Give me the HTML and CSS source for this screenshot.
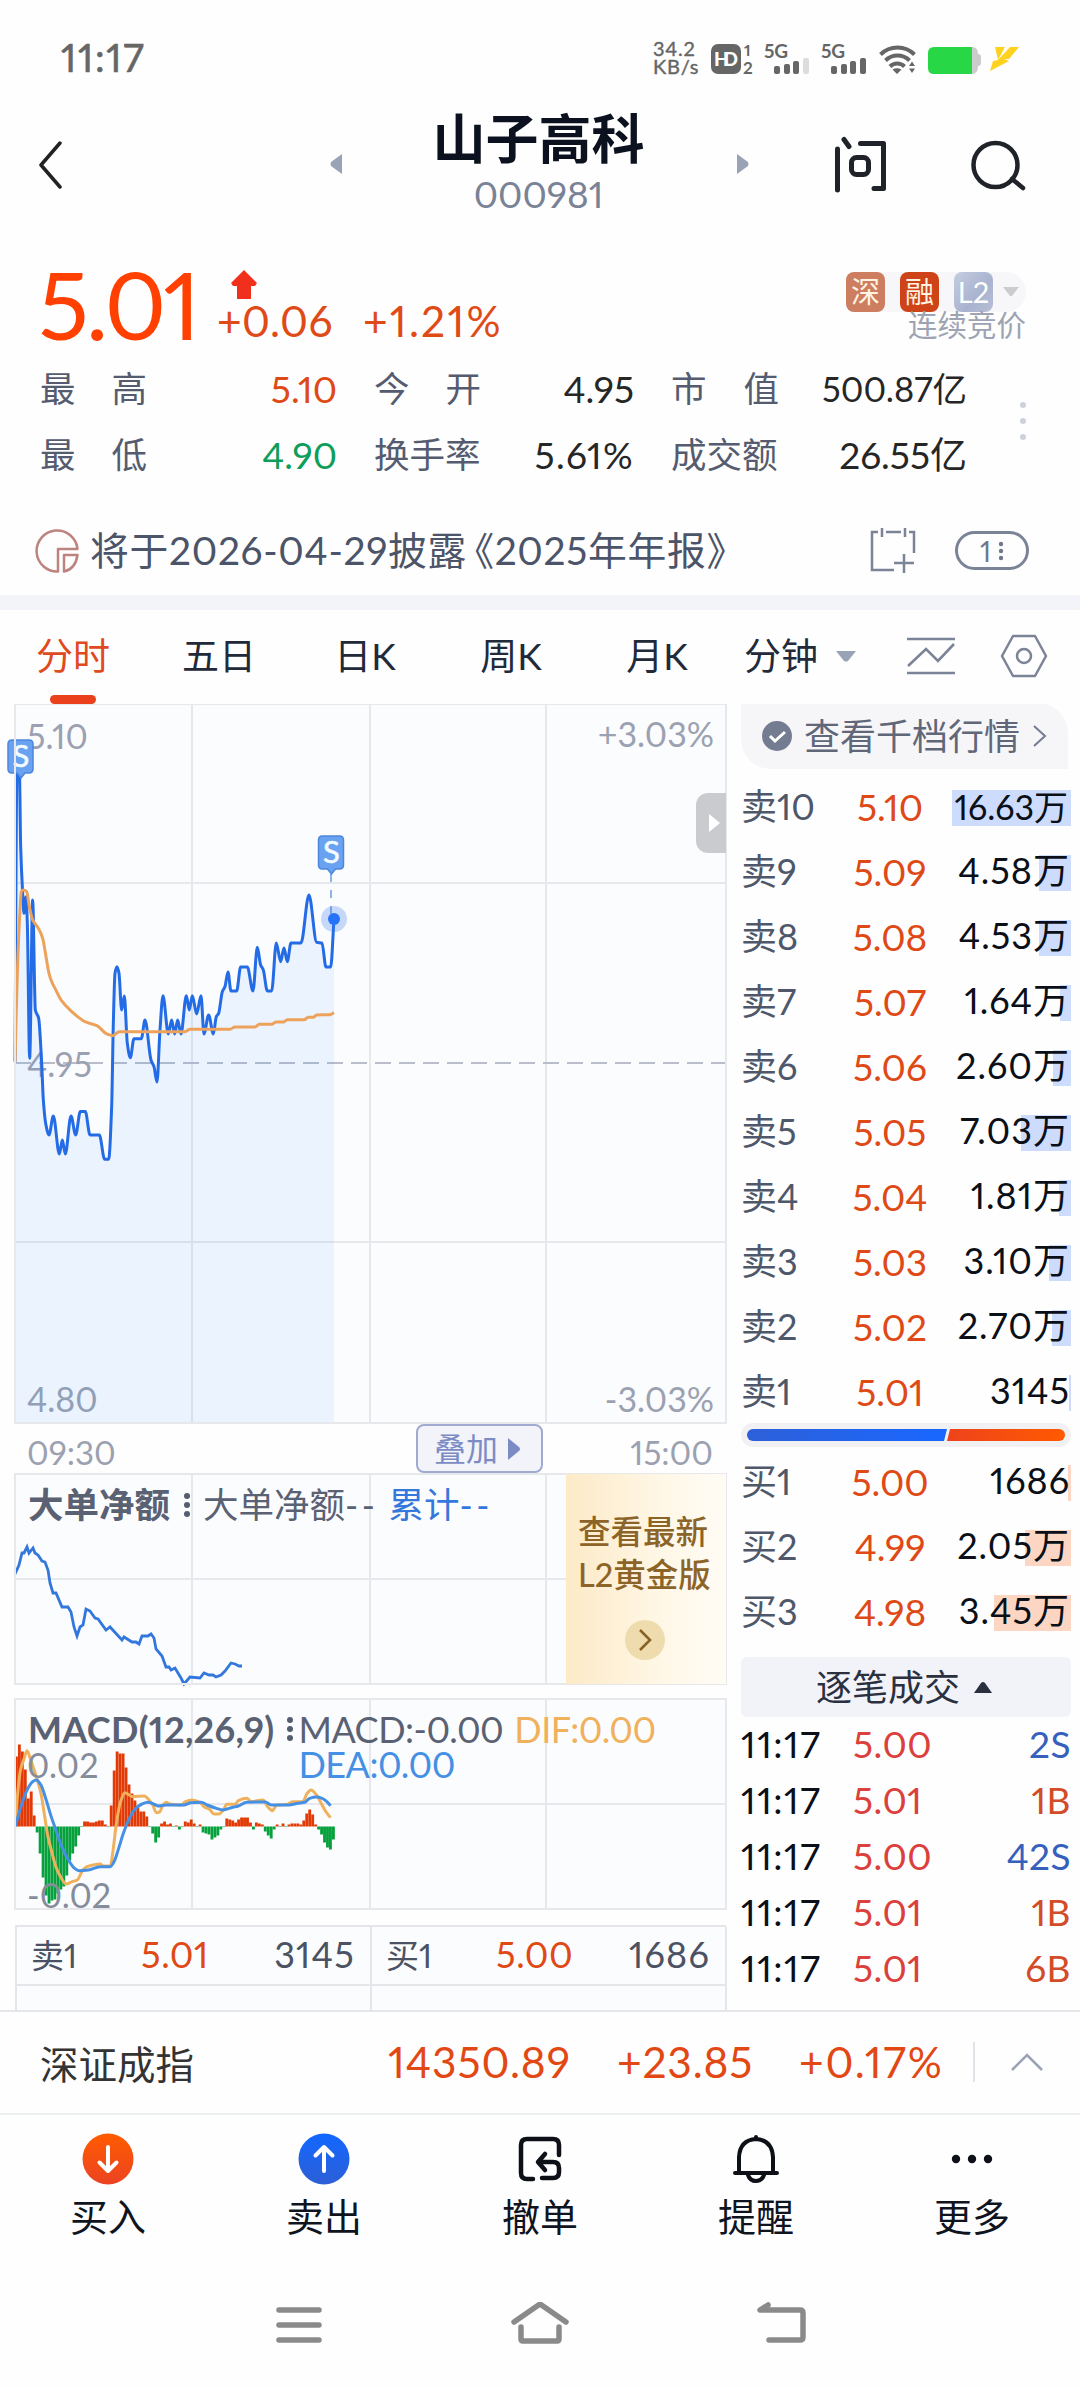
FILE: index.html
```html
<!DOCTYPE html>
<html lang="zh-CN">
<head>
    <meta charset="UTF-8">
    <meta name="viewport" content="width=device-width, initial-scale=1.0">
    <title>山子高科 000981</title>
    <link rel="stylesheet" href="styles.css">
</head>
<body>

<div class="status">
    <span class="clock">11:17</span>
    <div class="speed"><span>34.2</span><span>KB/s</span></div>
    <svg class="status-icons" viewBox="708 0 312 114" width="312" height="114">
        <g fill="#666">
            <rect x="711" y="44" width="30" height="30" rx="7"/>
            <text x="714" y="66" font-size="19" font-weight="900" fill="#fff" textLength="24">HD</text>
            <text x="744" y="56" font-size="16" font-weight="700">1</text>
            <text x="743" y="74" font-size="17" font-weight="700">2</text>
            <text x="764" y="58" font-size="19" font-weight="700" textLength="24">5G</text>
            <text x="821" y="58" font-size="19" font-weight="700" textLength="24">5G</text>
            <rect x="774" y="66" width="6" height="8" rx="2"/>
            <rect x="784" y="64" width="6" height="10" rx="2"/>
            <rect x="793" y="61" width="6" height="13" rx="2"/>
            <rect x="803" y="58" width="6" height="16" rx="2" fill="#ddd"/>
            <rect x="831" y="66" width="6" height="8" rx="2"/>
            <rect x="841" y="64" width="6" height="10" rx="2"/>
            <rect x="850" y="61" width="6" height="13" rx="2"/>
            <rect x="860" y="58" width="6" height="16" rx="2"/>
            <path d="M892.500 69.500q4.500-2.500 9 0l-4.500 4.500zM909 66l3-4.500 3 4.500zM909 68.500l3 4.500 3-4.500z"/>
        </g>
        <g fill="none" stroke="#666" stroke-width="4">
            <path d="M880.500 54.500a24 24 0 0 1 34 0M885.500 60.500a17 17 0 0 1 24 0M890 66.500a10 10 0 0 1 14.500 0"/>
        </g>
        <path d="M972 47q6 0 6 7 3 0 3 3v6q0 3-3 3 0 8-6 8z" fill="#ccc"/>
        <path d="M934 47h38v27h-38q-6 0-6-6V53q0-6 6-6z" fill="#28d745"/>
        <path d="M995 47h10l-7 13zM1010 47h9l-10 12h-5l5 2-19 10 3-10 5-1z" fill="#ffd21f"/>
    </svg>
</div>

<header class="header">
    <svg class="back" viewBox="0 0 24 48" width="24" height="48"><path d="M22 2L3 24l19 22" fill="none" stroke="#222" stroke-width="3.500" stroke-linecap="round" stroke-linejoin="round"/></svg>
    <svg class="prev" viewBox="0 0 12 20" width="12" height="20"><path d="M12 0v20L1 12q-1-2 0-4z" fill="#9aa3b5"/></svg>
    <div class="title">
        <h1>山子高科</h1>
        <p>000981</p>
    </div>
    <svg class="next" viewBox="0 0 12 20" width="12" height="20"><path d="M0 0v20l11-8q1-2 0-4z" fill="#9aa3b5"/></svg>
    <svg class="ask" viewBox="834 134 56 60" width="56" height="60"><g fill="none" stroke="#1f2228" stroke-width="5" stroke-linecap="round" stroke-linejoin="round"><path d="M845 139.500l5 7M838.500 149v41M861.500 143.500h23v45h-9.500"/><rect x="852.500" y="157.500" width="17" height="17" rx="5"/></g></svg>
    <svg class="search" viewBox="0 0 56 52" width="56" height="52"><g fill="none" stroke="#1f2228" stroke-width="4.500" stroke-linecap="round"><circle cx="25.500" cy="25" r="22"/><path d="M42 39l11 9"/></g></svg>
</header>

<section class="quote">
    <div class="price-row">
        <span class="price">5.01</span>
        <svg class="up" viewBox="0 0 28 30" width="28" height="30"><path d="M14 0l13 13-2 3h-4v13H7V16H3l-2-3z" fill="#f0301c"/></svg>
        <span class="change">+0.06</span>
        <span class="percent">+1.21%</span>
        <div class="tags">
            <div class="tag-list">
                <i class="tag tag-sz">深</i><i class="tag tag-rong">融</i><i class="tag tag-l2">L2</i>
                <svg viewBox="0 0 18 10" width="18" height="10"><path d="M1 0h16L10 9H8z" fill="#ccc"/></svg>
            </div>
            <div class="phase">连续竞价</div>
        </div>
    </div>
    <div class="stats">
        <label>最<b></b>高</label><span class="red">5.10</span>
        <label>今<b></b>开</label><span>4.95</span>
        <label>市<b></b>值</label><span class="cap">500.87亿</span>
        <label>最<b></b>低</label><span class="green">4.90</span>
        <label>换手率</label><span class="turnover">5.61%</span>
        <label>成交额</label><span>26.55亿</span>
    </div>
    <div class="dots"><i></i><i></i><i></i></div>
</section>

<section class="notice">
    <svg viewBox="0 0 44 44" width="44" height="44"><g fill="none" stroke="#bd837f" stroke-width="2.500" stroke-linejoin="round"><path d="M23 42.500A20.500 20.500 0 1 1 42.500 20H23z"/><path d="M29 26h13.500q-2 14-13.500 16.500z"/></g></svg>
    <span class="notice-text">将于2026-04-29披露<span class="bk">《</span>2025年年报》</span>
    <svg class="cal" viewBox="0 0 46 46" width="46" height="46"><g fill="none" stroke="#7b8396" stroke-width="2.500"><path d="M8 4H2v38h22M16 4h15M39 4h5v21M12 0v9M35 0v9M34 26v19M24 35h20"/></g></svg>
    <span class="page-pill">1<svg viewBox="0 0 6 22" width="6" height="22"><g fill="#6f788b"><circle cx="3" cy="4" r="2.200"/><circle cx="3" cy="11" r="2.200"/><circle cx="3" cy="18" r="2.200"/></g></svg></span>
</section>

<nav class="tabs">
    <a class="active">分时</a>
    <a>五日</a>
    <a>日K</a>
    <a>周K</a>
    <a>月K</a>
    <a class="minute">分钟 <svg viewBox="0 0 20 11" width="20" height="11"><path d="M0 0h20L12 10q-2 1-4 0z" fill="#9aa3b5"/></svg></a>
    <svg class="kline" viewBox="0 0 50 40" width="50" height="40"><g fill="none" stroke="#7b8396" stroke-width="2.600"><path d="M1 3h48M1 37h48M2 30L20 13l12 12L48 8"/></g></svg>
    <svg class="setting" viewBox="0 0 48 44" width="48" height="44"><g fill="none" stroke="#7b8396" stroke-width="2.500"><path d="M13 2h22l11 20-11 20H13L2 22z" stroke-linejoin="round"/><circle cx="24" cy="22" r="7"/></g></svg>
</nav>

<main class="main">
    <div class="left">
        <div class="panel trend">
            <svg id="trend" viewBox="0 0 711 719" width="711" height="719">
                <g class="grid"><path d="M177 0v719M355 0v719M531 0v719M0 179h711M0 538h711"/></g>
                <path d="M0 359h711" stroke="#b9bdc9" stroke-width="2" stroke-dasharray="16 8"/>
                <g class="axis">
                    <text x="12" y="45">5.10</text>
                    <text x="699" y="43" text-anchor="end">+3.03%</text>
                    <text x="12" y="373">4.95</text>
                    <text x="12" y="708">4.80</text>
                    <text x="699" y="708" text-anchor="end">-3.03%</text>
                </g>
                <g transform="translate(-15 -14) scale(.3333)" fill="none">
                    <path id="priceArea" fill="#2b86ff" fill-opacity=".08"/>
                    <path id="priceLine" stroke="#246be6" stroke-width="9" stroke-linejoin="round"/>
                    <path id="avgLine" stroke="#eda25c" stroke-width="9" stroke-linejoin="round"/>
                </g>
                <path d="M316 170v46" stroke="#6d9be0" stroke-width="1.500" stroke-dasharray="8 8"/>
                <circle cx="319" cy="215" r="13" fill="#3c7bf0" fill-opacity=".28"/>
                <circle cx="319" cy="215" r="6" fill="#2673fa"/>
                <g class="mark" transform="translate(-7 35)">
                    <path d="M4 1h17q4 0 4 4v25q0 4-4 4h-4l-4 5-4-5H4q-4 0-4-4V5q0-4 4-4z"/>
                    <text x="13" y="28" text-anchor="middle">S</text>
                </g>
                <g class="mark" transform="translate(303.500 131)">
                    <path d="M4 1h17q4 0 4 4v25q0 4-4 4h-4l-4 5-4-5H4q-4 0-4-4V5q0-4 4-4z"/>
                    <text x="13" y="28" text-anchor="middle">S</text>
                </g>
            </svg>
            <span class="handle"><svg viewBox="0 0 11 18" width="11" height="18"><path d="M0 0l11 9-11 9z" fill="#fff"/></svg></span>
        </div>
        <div class="times">
            <span>09:30</span>
            <button class="overlay">叠加 <svg viewBox="0 0 12 22" width="12" height="22"><path d="M0 0l11 9q2 2 0 4L0 22z" fill="#7c8bc4"/></svg></button>
            <span>15:00</span>
        </div>
        <div class="panel flow">
            <svg viewBox="0 0 711 210" width="711" height="210">
                <g class="grid"><path d="M177 0v210M355 0v210M531 0v210M0 105h711"/></g>
                <polyline fill="none" stroke="#3377dc" stroke-width="2.800" points="0,100 4,91 7,79 9,79 12,73 14,79 18,74 20,79 23,81 27,87 30,88 33,96 35,109 38,119 41,119 47,133 53,133 56,138 59,153 62,162 65,153 68,151 71,135 75,137 80,144 83,145 91,156 95,153 107,166 109,163 117,168 121,168 124,170 127,162 133,162 136,160 139,164 141,175 147,182 151,193 154,193 156,196 160,194 166,204 169,210 175,203 185,204 189,199 194,201 198,201 201,203 206,201 210,197 216,189 220,190 224,192 227,192"/>
            </svg>
            <p class="legend"><b>大单净额</b><svg viewBox="0 0 8 26" width="8" height="26"><g fill="#555d70"><circle cx="4" cy="4" r="3"/><circle cx="4" cy="13" r="3"/><circle cx="4" cy="22" r="3"/></g></svg><span>大单净额<s>--</s></span><span class="blue">累计<s>--</s></span></p>
            <a class="ad">
                <span>查看最新</span>
                <span>L2黄金版</span>
                <svg viewBox="0 0 40 40" width="40" height="40"><circle cx="20" cy="20" r="20" fill="#efdcae"/><path d="M15 10l10 10-10 10" fill="none" stroke="#8a6124" stroke-width="2.600"/></svg>
            </a>
        </div>
        <div class="panel macd">
            <svg viewBox="0 0 711 210" width="711" height="210">
                <g class="grid"><path d="M177 0v210M355 0v210M531 0v210M0 105h711"/></g>
                <g id="macdBars"></g>
                <g transform="translate(-15 -9) scale(.4655 .3333)" fill="none" stroke-width="3">
                    <path id="difLine" stroke="#efb15c" vector-effect="non-scaling-stroke"/>
                    <path id="deaLine" stroke="#4590e4" vector-effect="non-scaling-stroke"/>
                </g>
                <g class="axis dark">
                    <text x="12" y="79">0.02</text>
                    <text x="12" y="209">-0.02</text>
                </g>
            </svg>
            <div class="legend">
                <b>MACD(12,26,9)</b><svg viewBox="0 0 8 26" width="8" height="26"><g fill="#555d70"><circle cx="4" cy="4" r="3"/><circle cx="4" cy="13" r="3"/><circle cx="4" cy="22" r="3"/></g></svg>
                <div class="macd-values"><span>MACD:-0.00</span><span class="orange">DIF:0.00</span><span class="sky">DEA:0.00</span></div>
            </div>
        </div>
        <div class="level1">
            <div><span>卖1</span><em>5.01</em><span>3145</span></div>
            <div><span>买1</span><em>5.00</em><span>1686</span></div>
            <div></div>
            <div></div>
        </div>
    </div>

    <div class="right">
        <a class="depth-link"><svg viewBox="0 0 30 30" width="30" height="30"><circle cx="15" cy="15" r="15" fill="#737c91"/><path d="M8 15l5 5 10-9" fill="none" stroke="#fff" stroke-width="3"/></svg><span>查看千档行情</span><svg viewBox="0 0 14 24" width="14" height="24"><path d="M1 2l11 10L1 22" fill="none" stroke="#737c91" stroke-width="2"/></svg></a>
        <ul class="book sell">
            <li><span>卖10</span><em>5.10</em><strong class="long"><i style="width:119px"></i>16.63万</strong></li>
            <li><span>卖9</span><em>5.09</em><strong><i style="width:32px"></i>4.58万</strong></li>
            <li><span>卖8</span><em>5.08</em><strong><i style="width:32px"></i>4.53万</strong></li>
            <li><span>卖7</span><em>5.07</em><strong><i style="width:11px"></i>1.64万</strong></li>
            <li><span>卖6</span><em>5.06</em><strong><i style="width:18px"></i>2.60万</strong></li>
            <li><span>卖5</span><em>5.05</em><strong><i style="width:50px"></i>7.03万</strong></li>
            <li><span>卖4</span><em>5.04</em><strong><i style="width:12px"></i>1.81万</strong></li>
            <li><span>卖3</span><em>5.03</em><strong><i style="width:22px"></i>3.10万</strong></li>
            <li><span>卖2</span><em>5.02</em><strong><i style="width:19px"></i>2.70万</strong></li>
            <li><span>卖1</span><em>5.01</em><strong><i style="width:2px"></i>3145</strong></li>
        </ul>
        <div class="ratio"><i class="ratio-sell"></i><i class="ratio-buy"></i></div>
        <ul class="book buy">
            <li><span>买1</span><em>5.00</em><strong><i style="width:3px"></i>1686</strong></li>
            <li><span>买2</span><em>4.99</em><strong><i style="width:46px"></i>2.05万</strong></li>
            <li><span>买3</span><em>4.98</em><strong><i style="width:77px"></i>3.45万</strong></li>
        </ul>
        <div class="tick-head">逐笔成交 <svg viewBox="0 0 18 11" width="18" height="11"><path d="M0 11L7 1q2-2 4 0l7 10z" fill="#2a3040"/></svg></div>
        <ul class="ticks">
            <li><span>11:17</span><em>5.00</em><strong class="s">2S</strong></li>
            <li><span>11:17</span><em>5.01</em><strong class="b">1B</strong></li>
            <li><span>11:17</span><em>5.00</em><strong class="s">42S</strong></li>
            <li><span>11:17</span><em>5.01</em><strong class="b">1B</strong></li>
            <li><span>11:17</span><em>5.01</em><strong class="b">6B</strong></li>
        </ul>
    </div>
</main>

<div class="index-bar">
    <span class="index-name">深证成指</span>
    <span class="i1">14350.89</span>
    <span class="i2">+23.85</span>
    <span class="i3">+0.17%</span>
    <svg viewBox="0 0 34 20" width="34" height="20"><path d="M2 18L17 3l15 15" fill="none" stroke="#9aa3b5" stroke-width="2.500"/></svg>
</div>

<nav class="actions">
    <a>
        <svg viewBox="0 0 52 52" width="52" height="52">
            <defs><linearGradient id="gBuy" x2="0" y2="1"><stop stop-color="#ff5c00"/><stop offset="1" stop-color="#ec4322"/></linearGradient></defs>
            <circle cx="26" cy="26" r="25.500" fill="url(#gBuy)"/><path d="M26 14v23M17.500 29.500L26 38l8.500-8.500" fill="none" stroke="#fff" stroke-width="4" stroke-linecap="round" stroke-linejoin="round"/>
        </svg>
        买入
    </a>
    <a>
        <svg viewBox="0 0 52 52" width="52" height="52">
            <defs><linearGradient id="gSell" x2="0" y2="1"><stop stop-color="#1267ff"/><stop offset="1" stop-color="#2d5fd6"/></linearGradient></defs>
            <circle cx="26" cy="26" r="25.500" fill="url(#gSell)"/><path d="M26 38V15M17.500 22.500L26 14l8.500 8.500" fill="none" stroke="#fff" stroke-width="4" stroke-linecap="round" stroke-linejoin="round"/>
        </svg>
        卖出
    </a>
    <a>
        <svg viewBox="0 0 52 52" width="52" height="52"><path d="M19 46h-6q-6 0-6-6V12q0-6 6-6h26q6 0 6 6v10M31 21l-7 8 7 8M25 29h14q6 0 6 6v4q0 6-6 6H28" fill="none" stroke="#0d1017" stroke-width="4.500" stroke-linecap="round" stroke-linejoin="round"/></svg>
        撤单
    </a>
    <a>
        <svg viewBox="0 0 52 52" width="52" height="52"><path d="M5 40h42M9 39V24Q10 7 26 6q16 1 17 18v15M26 5V4M18 42q2 6 8 6t8-6" fill="none" stroke="#0d1017" stroke-width="4" stroke-linecap="round"/></svg>
        提醒
    </a>
    <a>
        <svg viewBox="0 0 52 52" width="52" height="52"><g fill="#0d1017"><circle cx="10" cy="26" r="4.200"/><circle cx="26" cy="26" r="4.200"/><circle cx="42" cy="26" r="4.200"/></g></svg>
        更多
    </a>
</nav>

<div class="sysnav">
    <svg viewBox="0 0 60 48" width="60" height="48"><path d="M10 8h40M10 23h40M10 38h40" stroke="#8a8a8a" stroke-width="5.500" stroke-linecap="round"/></svg>
    <svg viewBox="0 0 60 48" width="60" height="48"><path d="M4 20L30 2l26 18M11 25v12q0 2 2 2h34q2 0 2-2V25" fill="none" stroke="#8a8a8a" stroke-width="5.500" stroke-linecap="round" stroke-linejoin="round"/></svg>
    <svg viewBox="0 0 60 48" width="60" height="48"><path d="M17 3L9 8h40q3 0 3 3v24q0 3-3 3H18" fill="none" stroke="#8a8a8a" stroke-width="5.500" stroke-linecap="round" stroke-linejoin="round"/></svg>
</div>

<script>
    const price = [45,1115, 51,235, 58,235, 62,470, 68,610, 72,670, 78,620, 82,700, 89,1105, 98,630, 106,960, 116,985, 125,1120, 130,1230, 137,1300, 147,1335, 160,1278, 178,1392, 187,1350, 196,1392, 213,1278, 227,1335, 241,1265, 256,1265, 270,1335, 298,1335, 314,1408, 326,1408, 335,1250, 340,1000, 345,850, 351,830, 357,850, 365,960, 373,918, 382,1060, 391,1103, 402,1046, 424,1046, 435,990, 453,1110, 462,1130, 471,1176, 480,1020, 489,917, 505,1032, 515,990, 524,1032, 533,990, 543,1032, 559,917, 568,960, 577,917, 590,972, 603,917, 612,1032, 626,975, 640,1032, 649,980, 656,970, 667,905, 675,890, 684,846, 693,903, 710,903, 722,831, 742,831, 759,903, 772,772, 782,825, 790,840, 802,903, 815,903, 829,759, 842,815, 852,774, 862,815, 873,759, 903,759, 927,615, 950,757, 966,759, 978,831, 992,831, 1002,690];
    const avg = [45,1115, 52,850, 60,660, 64,605, 70,600, 80,605, 88,650, 98,690, 115,715, 128,745, 138,800, 147,850, 155,875, 165,895, 183,930, 210,960, 255,995, 292,1008, 320,1032, 338,1037, 358,1025, 555,1025, 570,1018, 690,1018, 705,1011, 765,1011, 778,1003, 815,1003, 828,996, 850,996, 862,989, 912,989, 925,982, 940,982, 950,975, 990,974, 1002,968];
    const dif = [33,408, 38,310, 44,240, 52,205, 58,182, 66,210, 78,260, 88,310, 95,370, 103,440, 112,490, 120,530, 130,560, 142,582, 155,575, 166,570, 178,540, 187,530, 215,522, 222,528, 237,528, 243,480, 250,400, 258,340, 268,308, 285,320, 310,318, 317,325, 328,345, 336,368, 343,366, 350,345, 357,337, 365,342, 390,345, 398,335, 412,330, 430,338, 438,350, 450,358, 460,372, 470,372, 480,360, 487,343, 505,343, 512,332, 530,325, 540,335, 565,330, 575,350, 585,362, 595,345, 618,343, 628,335, 650,335, 660,310, 668,300, 680,315, 690,340, 700,365, 710,383];
    const dea = [33,408, 45,350, 60,295, 70,275, 78,270, 88,285, 97,320, 110,380, 120,420, 130,460, 145,505, 160,535, 170,542, 190,540, 215,530, 237,530, 245,515, 255,475, 265,430, 278,385, 290,358, 305,342, 318,337, 330,342, 340,348, 357,345, 395,345, 410,338, 432,337, 445,345, 465,355, 478,360, 500,352, 512,348, 530,337, 570,336, 583,345, 620,345, 640,340, 655,337, 665,325, 680,321, 692,325, 702,335, 710,347];
    const bars = [70,82,75,57,28,35,11,-6,-27,-51,-69,-77,-74,-73,-67,-63,-60,-49,-34,-27,-20,-9,0,5,5,4,4,5,6,6,2,0,21,56,75,73,73,59,42,33,26,19,15,15,10,0,-7,-16,-11,3,5,2,3,0,1,-3,0,5,4,7,3,0,2,-6,-7,-8,-13,-11,-9,-3,0,8,7,6,4,7,9,9,9,4,-3,4,3,2,-5,-9,-12,-3,2,0,3,0,2,3,3,3,2,6,13,17,12,2,-3,-8,-16,-21,-23,-13];

    // monotone cubic through a flat [x, y, x, y, ...] list
    function smooth(a) {
        const n = a.length / 2;
        const slope = [];
        for (let i = 0; i < n - 1; i++) {
            slope.push((a[2 * i + 3] - a[2 * i + 1]) / (a[2 * i + 2] - a[2 * i]));
        }
        const m = [slope[0]];
        for (let i = 1; i < n - 1; i++) {
            const p = slope[i - 1], q = slope[i];
            m.push(p * q <= 0 ? 0 : 2 * p * q / (p + q));
        }
        m.push(slope[n - 2]);
        let d = `M${a[0]} ${a[1]}`;
        for (let i = 0; i < n - 1; i++) {
            const x0 = a[2 * i], y0 = a[2 * i + 1], x1 = a[2 * i + 2], y1 = a[2 * i + 3];
            const h = (x1 - x0) / 3;
            d += `C${x0 + h} ${y0 + m[i] * h} ${x1 - h} ${y1 - m[i + 1] * h} ${x1} ${y1}`;
        }
        return d;
    }

    document.getElementById('priceLine').setAttribute('d', smooth(price));
    document.getElementById('priceArea').setAttribute('d', smooth(price) + 'V2199H45Z');
    document.getElementById('avgLine').setAttribute('d', smooth(avg));
    document.getElementById('difLine').setAttribute('d', smooth(dif));
    document.getElementById('deaLine').setAttribute('d', smooth(dea));

    const step = 711 / 240;
    document.getElementById('macdBars').innerHTML = bars.map((v, i) =>
        `<rect x="${(i * step).toFixed(2)}" y="${v > 0 ? 127.5 - v : 127.5}" width="2.85" height="${Math.abs(v) || 0.5}" fill="${v > 0 ? '#e23a06' : '#06a03c'}"/>`
    ).join('');
</script>

</body>
</html>
```
FILE: styles.css
```css
* {
    box-sizing: border-box;
}
body {
    width: 1080px;
    height: 2388px;
    margin: 0;
    background: #fefefe;
    color: #262626;
    font-family: Lato, "Noto Sans CJK SC", sans-serif;
    font-size: 36px;
    font-variant-numeric: proportional-nums;
    overflow: hidden;
}
h1, p, ul {
    margin: 0;
    padding: 0;
}
ul {
    list-style: none;
}
i, em {
    font-style: normal;
}
svg {
    display: block;
    flex: none;
}
a, span {
    white-space: nowrap;
}
.red {
    color: #df4916;
}
.green {
    color: #0e9e5b;
}
.blue {
    color: #3478dc;
}

/* status bar */
.status {
    display: flex;
    height: 104px;
    padding: 0 60px 0 61px;
}
.clock {
    font-size: 38.5px;
    line-height: 114px;
    color: #666;
    letter-spacing: 1.7px;
    -webkit-text-stroke: 0.6px #666;
}
.speed {
    display: flex;
    flex-direction: column;
    width: 57px;
    margin-left: auto;
    padding: 39px 0 0 2px;
    font-size: 20px;
    line-height: 18px;
    letter-spacing: 0.8px;
    color: #666;
    -webkit-text-stroke: 0.4px #666;
}

/* title */
.header {
    display: flex;
    align-items: center;
    height: 124px;
    padding-left: 38px;
}
.back {
    margin-top: -2px;
}
.prev {
    margin: -4px 0 0 268px;
}
.title {
    width: 393px;
    margin: -9px 2px 0 0;
    text-align: center;
}
.title h1 {
    font-size: 53px;
    line-height: 64px;
    font-weight: 700;
    color: #0b111e;
}
.title p {
    font-size: 37px;
    line-height: 46px;
    color: #7a8296;
}
.next {
    margin-top: -4px;
}
.ask {
    margin-left: 84px;
    margin-top: -4px;
}
.search {
    margin-left: 81px;
}

/* quote */
.quote {
    position: relative;
    height: 278px;
    padding: 28px 54px 0 38px;
}
.price-row {
    display: flex;
    height: 100px;
    color: #e04a17;
    position: relative;
}
.price {
    width: 179px;
    font-size: 94px;
    line-height: 95px;
    letter-spacing: -3px;
    color: #ff4000;
}
.up {
    position: absolute;
    left: 192px;
    top: 14px;
}
.change, .percent {
    font-size: 42.5px;
    line-height: 130px;
}
.change {
    width: 146px;
    letter-spacing: 0.4px;
}
.percent {
    letter-spacing: 2.2px;
}
.tags {
    margin-left: auto;
    text-align: right;
    padding-top: 16px;
}
.tag-list {
    display: flex;
    align-items: center;
    height: 40px;
    width: 180px;
    border-radius: 8px 20px 20px 8px;
    background: #f7f7f9;
}
.tag {
    width: 39px;
    height: 40px;
    margin-right: 15px;
    border-radius: 8px;
    font-size: 29px;
    line-height: 39px;
    text-align: center;
    color: #fff3e2;
}
.tag-sz {
    background: #ce7e60;
}
.tag-rong {
    background: #ce4418;
}
.tag-l2 {
    margin-right: 9px;
    color: #fff;
    background: linear-gradient(130deg, #c5cde2, #a9b3cf 60%, #b8bfd6);
}
.phase {
    font-size: 29.5px;
    line-height: 28px;
    color: #9da3b3;
    margin-top: -1px;
}
.stats {
    display: grid;
    grid-template-columns: 107px 190px 144px 153px 145px 188px;
    grid-auto-rows: 66px;
    margin-left: 2px;
    line-height: 66px;
}
.stats label {
    display: flex;
    justify-content: space-between;
    font-size: 35.5px;
    color: #555c6f;
}
.stats label:not(:nth-of-type(3n+1)) {
    padding-left: 37px;
}
.stats span {
    text-align: right;
    font-size: 37px;
}
.stats .cap {
    font-size: 34.5px;
}
.stats .turnover {
    letter-spacing: 1.3px;
}
.dots {
    position: absolute;
    left: 1020px;
    top: 174px;
    display: grid;
    gap: 10px;
}
.dots i {
    width: 6px;
    height: 6px;
    border-radius: 50%;
    background: #ccd1dc;
}

/* notice */
.notice {
    display: flex;
    align-items: center;
    box-sizing: content-box;
    height: 73px;
    padding: 8px 51px 8px 35px;
    border-bottom: 15px solid #f3f4f9;
    color: #4b5468;
}
.notice-text {
    margin: -6px 0 0 11px;
    font-size: 38.8px;
    letter-spacing: 0.7px;
}
.bk {
    margin-left: -12px;
}
.cal {
    margin-left: auto;
}
.page-pill {
    display: flex;
    align-items: center;
    justify-content: center;
    gap: 7px;
    width: 74px;
    height: 39px;
    margin-left: 39px;
    border: 3px solid #7b8396;
    border-radius: 20px;
    font-size: 28px;
    color: #6f788b;
}

/* tabs */
.tabs {
    display: grid;
    grid-template-columns: 146px 146px 146px 146px 146px 165px 90px 48px;
    align-items: center;
    height: 94px;
    color: #222a3a;
    font-size: 37px;
}
.tabs a {
    position: relative;
    text-align: center;
    line-height: 88px;
    margin-top: -2px;
}
.tabs .active {
    color: #df4a20;
}
.tabs .active::after {
    content: "";
    position: absolute;
    left: 50px;
    bottom: -4px;
    width: 46px;
    height: 9px;
    border-radius: 5px;
    background: #ea411c;
}
.tabs .minute {
    display: flex;
    align-items: center;
    gap: 18px;
    padding-left: 14px;
}
.kline {
    margin-left: 11px;
    margin-top: -2px;
}
.setting {
    margin-left: 15px;
    margin-top: -2px;
}

/* charts */
.main {
    display: flex;
    height: 1308px;
    padding-left: 15px;
    overflow: hidden;
    border-bottom: 2px solid #e4e6ea;
}
.left {
    width: 711px;
}
.panel {
    position: relative;
    background: #fbfcfe;
    outline: 2px solid #e6e8ec;
    outline-offset: -1px;
}
.panel > svg {
    overflow: visible;
}
.grid path {
    stroke: #e6e8ec;
    stroke-width: 2;
}
.axis text {
    font-size: 34px;
    fill: #9ba1b1;
}
.axis.dark text {
    fill: #858c9b;
}
.mark path {
    fill: #68a2f0;
    stroke: #4b87dc;
    stroke-width: 1.5;
}
.mark text {
    font-size: 31px;
    fill: #f2fbff;
    stroke: #f2fbff;
    stroke-width: 0.6;
}
.handle {
    position: absolute;
    right: 0;
    top: 89px;
    width: 30px;
    height: 60px;
    padding: 21px 0 0 13px;
    border-radius: 12px 0 0 12px;
    background: #c9cbce;
}
.times {
    display: flex;
    align-items: center;
    justify-content: space-between;
    height: 51px;
    padding: 6px 13px 0 12px;
    font-size: 33px;
    color: #9ba1b1;
}
.overlay {
    display: flex;
    align-items: center;
    justify-content: center;
    gap: 10px;
    width: 127px;
    height: 49px;
    margin: -6px -66px 0 146px;
    padding: 0 4px 0 0;
    border: 2px solid #a0aad0;
    border-radius: 8px;
    background: #f2f4fa;
    color: #7c8bc4;
    font: inherit;
    font-size: 32px;
    line-height: 44px;
}
.flow, .macd {
    height: 210px;
}
.legend {
    position: absolute;
    left: 13px;
    top: 8px;
    display: flex;
    align-items: center;
    font-size: 35.5px;
    line-height: 46px;
    color: #5a6173;
}
.legend > svg {
    margin: 0 12px 0 13px;
}
.legend s {
    text-decoration: none;
    letter-spacing: 3.5px;
}
.legend .blue {
    margin-left: 10px;
}
.ad {
    position: absolute;
    right: 0;
    top: 0;
    width: 160px;
    height: 210px;
    padding: 36px 0 0 12px;
    background: linear-gradient(90deg, #fdeac7, #fff8e9 65%, #fffcf5);
    color: #8d6428;
    font-size: 32.5px;
    font-weight: 500;
    line-height: 43px;
}
.ad span {
    display: block;
}
.ad svg {
    margin: 24px 0 0 47px;
}
.macd {
    margin-top: 15px;
}
.macd .legend {
    top: 7px;
    align-items: flex-start;
    font-size: 36px;
}
.macd .legend b {
    letter-spacing: 0.3px;
}
.macd .legend > svg {
    margin: 10px 4px 0 12px;
}
.macd-values {
    display: flex;
    flex-wrap: wrap;
    width: 400px;
    line-height: 35px;
    padding-top: 6px;
}
.macd-values span {
    margin-right: 11px;
    letter-spacing: -0.5px;
}
.orange {
    color: #efb15c;
}
.sky {
    color: #4590e4;
}
.level1 {
    display: grid;
    grid-template-columns: 355px 355px;
    grid-template-rows: 59px 40px;
    margin-top: 16px;
    border-left: 2px solid #e4e6ea;
    border-top: 2px solid #e4e6ea;
    background: #fbfcfe;
    color: #4b5263;
}
.level1 div {
    display: flex;
    align-items: center;
    border-right: 2px solid #e4e6ea;
    border-bottom: 2px solid #e4e6ea;
    padding: 0 15px 4px 14px;
    font-size: 33px;
}
.level1 em {
    margin-left: 64px;
    margin-right: auto;
    font-size: 36px;
    letter-spacing: 0.5px;
    color: #df4916;
}
.level1 span:last-child {
    font-size: 36px;
    letter-spacing: 1.2px;
}

/* order book */
.right {
    width: 330px;
    margin-left: 15px;
    line-height: 65px;
}
.depth-link {
    display: flex;
    align-items: center;
    width: 327px;
    height: 66px;
    margin: -1px 0 5px 0;
    padding-left: 21px;
    border-radius: 0 30px 0 30px;
    background: #f6f6f9;
    color: #5f6779;
}
.depth-link span {
    margin: 0 13px 0 12px;
}
.book li {
    display: grid;
    grid-template-columns: 93px 112px 125px;
    height: 65px;
    font-size: 36px;
    color: #4f586b;
}
.book em {
    text-align: center;
    color: #df4916;
    font-size: 37px;
}
.book strong {
    position: relative;
    font-weight: 400;
    font-size: 36px;
    line-height: 62px;
    text-align: right;
    color: #0b0f17;
    padding-right: 1px;
    letter-spacing: 1px;
}
.book .long {
    font-size: 34px;
    line-height: 65px;
    letter-spacing: 0;
    padding-right: 3px;
}
.book i {
    position: absolute;
    z-index: -1;
    right: 0;
    top: 16px;
    height: 36px;
    background: #cddcfc;
}
.book.buy i {
    background: #fcd6c3;
}
.ratio {
    display: flex;
    gap: 3px;
    height: 24px;
    margin: -1px 0 2px;
    padding: 6px;
    border-radius: 12px;
    background: #f1f1f3;
}
.ratio i {
    height: 12px;
}
.ratio-sell {
    width: 200px;
    border-radius: 6px 0 0 6px;
    background: linear-gradient(90deg, #2d60d8, #1967ff);
    clip-path: polygon(0 0, 100% 0, calc(100% - 3px) 100%, 0 100%);
}
.ratio-buy {
    flex: 1;
    margin-left: -3px;
    border-radius: 0 6px 6px 0;
    background: linear-gradient(90deg, #ee431c, #ff5a00);
    clip-path: polygon(3px 0, 100% 0, 100% 100%, 0 100%);
}
.tick-head {
    display: flex;
    align-items: center;
    justify-content: center;
    gap: 14px;
    height: 60px;
    margin-top: 13px;
    padding-right: 4px;
    border-radius: 6px;
    background: #f2f3f8;
    color: #2a3040;
}
.ticks li {
    display: grid;
    grid-template-columns: 112px 100px 1fr;
    height: 56px;
    line-height: 54px;
    font-size: 37px;
    color: #0b0f17;
}
.ticks span {
    letter-spacing: 1.5px;
}
.ticks em {
    color: #dc403c;
    letter-spacing: 0.5px;
}
.ticks strong {
    font-weight: 400;
    text-align: right;
    letter-spacing: 0.5px;
}
.ticks .s {
    color: #3561bd;
}
.ticks .b {
    color: #d24c28;
}

/* index bar */
.index-bar {
    display: flex;
    align-items: center;
    height: 103px;
    padding: 0 0 2px 40px;
    border-bottom: 2px solid #edf0f0;
    font-size: 42.5px;
    color: #e24814;
}
.index-name {
    width: 348px;
    font-size: 38.5px;
    color: #333;
}
.i1 {
    width: 229px;
    letter-spacing: 0.9px;
}
.i2 {
    width: 182px;
    letter-spacing: 0.8px;
}
.i3 {
    width: 176px;
    border-right: 2px solid #e0e3e8;
    line-height: 40px;
    letter-spacing: 1.8px;
}
.index-bar svg {
    margin-left: 35px;
}

/* actions */
.actions {
    display: flex;
    height: 170px;
    padding-top: 18px;
}
.actions a {
    display: flex;
    flex-direction: column;
    align-items: center;
    gap: 4px;
    width: 216px;
    font-size: 38px;
    line-height: 54px;
    color: #0f141f;
}
.sysnav {
    display: flex;
    justify-content: center;
    gap: 181px;
    padding-top: 17px;
}
```
